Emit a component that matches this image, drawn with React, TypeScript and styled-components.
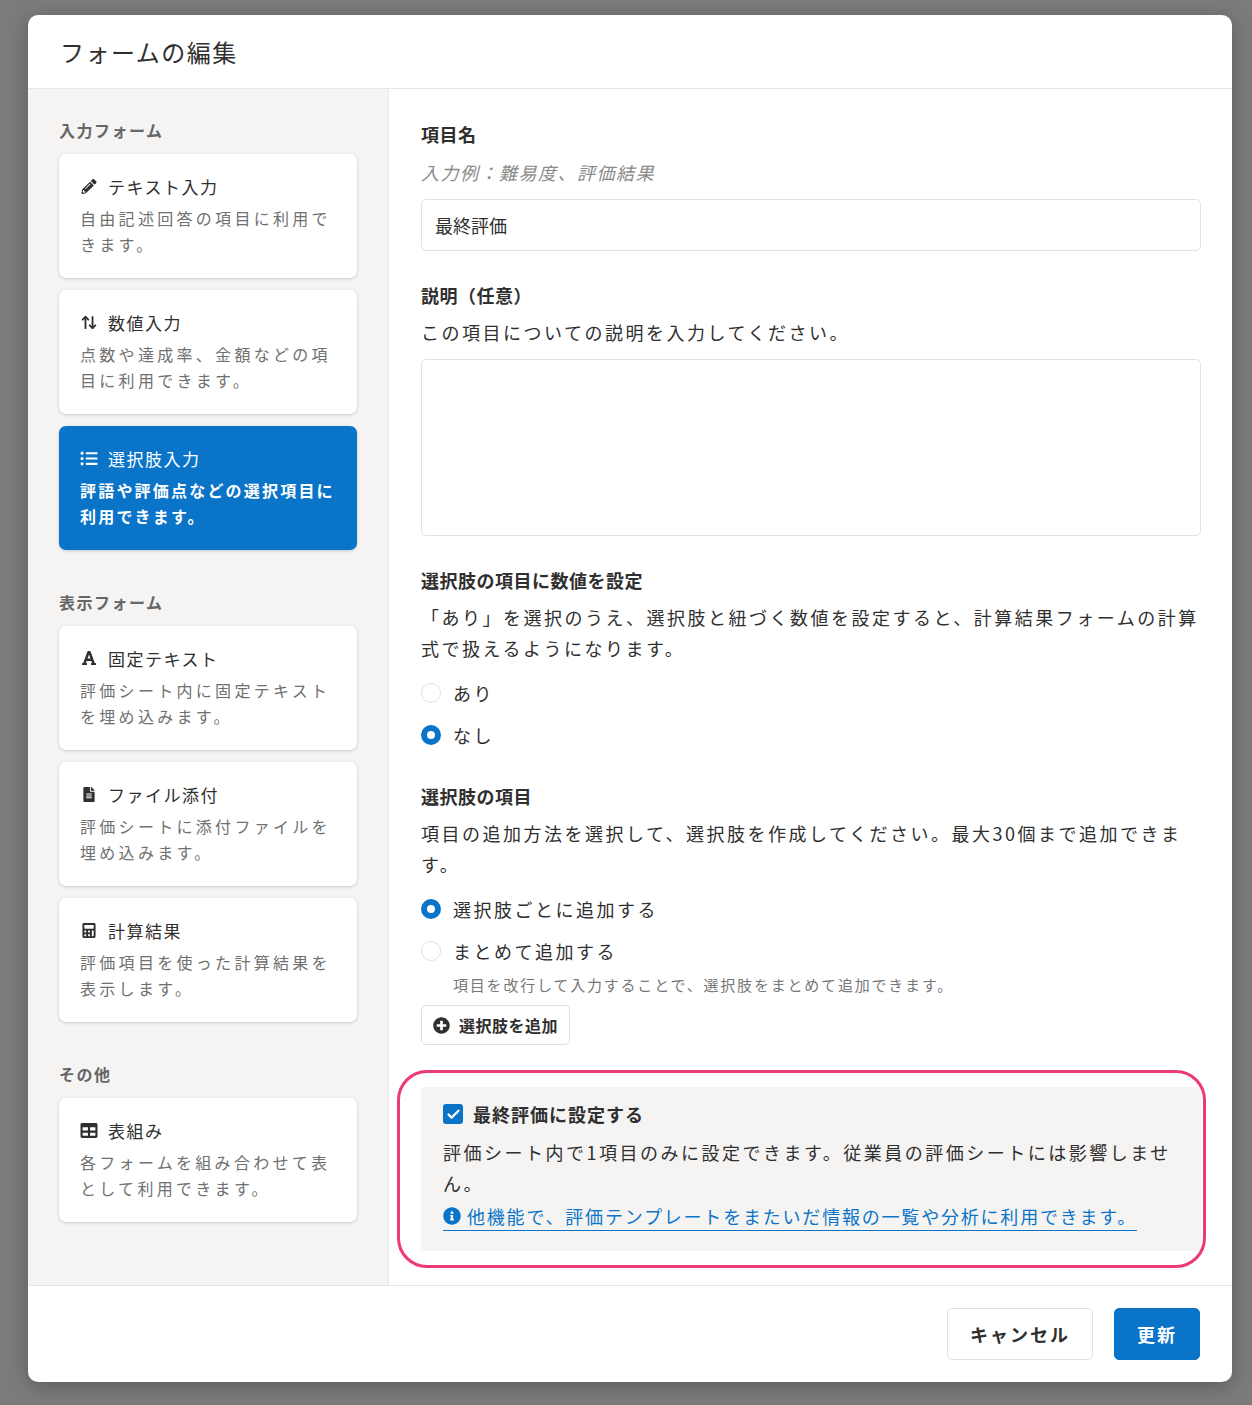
import React from "react";
import styled, { createGlobalStyle } from "styled-components";
import {
    FaPencilAlt,
    FaListUl,
    FaFont,
    FaFileAlt,
    FaCalculator,
    FaTable,
    FaPlusCircle,
    FaInfoCircle,
} from "react-icons/fa";
import { ArrowUpDown, Check } from "lucide-react";

const blue = "#0a74c9";
const text = "#2f2f2f";
const muted = "#707070";

const GlobalStyle = createGlobalStyle`
    html, body {
        margin: 0;
        background: #7d7d7d;
        font-family: "Noto Sans CJK JP", "Noto Sans", sans-serif;
        color: ${text};
    }
`;

const Page = styled.div`
    width: 1252px;
    height: 1405px;
    padding: 15px 20px 0 28px;
    box-sizing: border-box;
    background: #7b7b7b;
`;

const Modal = styled.div`
    width: 1204px;
    height: 1367px;
    background: #fff;
    border-radius: 10px;
    overflow: hidden;
    display: flex;
    flex-direction: column;
    box-shadow: 0 4px 20px rgba(0, 0, 0, 0.25);
`;

const Header = styled.div`
    height: 73px;
    flex-shrink: 0;
    display: flex;
    align-items: center;
    padding-left: 32px;
    font-size: 24px;
    letter-spacing: 1.5px;
    border-bottom: 1px solid #e6e6e6;
`;

const Body = styled.div`
    flex: 1;
    display: flex;
    min-height: 0;
`;

const Sidebar = styled.div`
    width: 361px;
    flex-shrink: 0;
    background: #f5f4f3;
    border-right: 1px solid #e8e8e8;
    box-sizing: border-box;
    padding: 29px 31px 0 31px;
`;

const GroupTitle = styled.div`
    font-size: 16px;
    font-weight: 700;
    color: #666;
    margin: 0 0 12px;
    letter-spacing: 1.5px;
`;

const Group = styled.div`
    display: flex;
    flex-direction: column;
    gap: 12px;
    margin-bottom: 40px;
`;

const Card = styled.div<{ $active?: boolean }>`
    height: 124px;
    box-sizing: border-box;
    padding: 19px 21px;
    border-radius: 7px;
    background: ${(p) => (p.$active ? blue : "#fff")};
    color: ${(p) => (p.$active ? "#fff" : text)};
    box-shadow: 0 1px 3px rgba(0, 0, 0, 0.18);
`;

const CardTitle = styled.div`
    display: flex;
    align-items: center;
    gap: 10px;
    font-size: 17px;
    height: 26px;
    margin-bottom: 6px;
    letter-spacing: 1.5px;
    svg {
        width: 18px;
    }
`;

const CardDesc = styled.div<{ $active?: boolean }>`
    font-size: 16px;
    line-height: 26px;
    letter-spacing: 3.3px;
    color: ${(p) => (p.$active ? "#fff" : muted)};
    font-weight: ${(p) => (p.$active ? 700 : 400)};
    letter-spacing: ${(p) => (p.$active ? "2.2px" : "3.3px")};
`;

const Main = styled.div`
    flex: 1;
    padding: 31px 31px 0 32px;
    box-sizing: border-box;
`;

const Label = styled.div<{ $mt?: number }>`
    font-size: 18px;
    font-weight: 700;
    margin-top: ${(p) => p.$mt ?? 0}px;
    line-height: 28px;
    letter-spacing: 0.5px;
`;

const Hint = styled.div`
    font-size: 18px;
    color: #8a8a8a;
    font-style: italic;
    line-height: 28px;
    margin: 10px 0 13px;
    letter-spacing: 1.5px;
`;

const Para = styled.div`
    font-size: 18px;
    line-height: 31px;
    letter-spacing: 2.5px;
    margin-top: 8px;
`;

const Input = styled.div`
    height: 52px;
    box-sizing: border-box;
    border: 1px solid #e2e2e2;
    border-radius: 5px;
    padding: 0 13px;
    display: flex;
    align-items: center;
    font-size: 18px;
`;

const TextArea = styled.div`
    height: 177px;
    box-sizing: border-box;
    border: 1px solid #e2e2e2;
    border-radius: 5px;
    margin-top: 11px;
`;

const RadioGroup = styled.div`
    margin-top: 8px;
`;

const RadioRow = styled.div`
    display: flex;
    align-items: center;
    gap: 12px;
    height: 42px;
    font-size: 18px;
    letter-spacing: 2.5px;
`;

const Radio = styled.span<{ $on?: boolean }>`
    width: 20px;
    height: 20px;
    box-sizing: border-box;
    border-radius: 50%;
    border: ${(p) => (p.$on ? `6px solid ${blue}` : "1px solid #e0e0e0")};
    background: #fff;
`;

const SmallNote = styled.div`
    font-size: 15px;
    color: #777;
    padding-left: 32px;
    letter-spacing: 1.8px;
    margin-top: 2px;
`;

const AddButton = styled.div`
    display: inline-flex;
    align-items: center;
    gap: 9px;
    height: 40px;
    box-sizing: border-box;
    padding: 0 11px;
    border: 1px solid #e0e0e0;
    border-radius: 5px;
    font-size: 16px;
    font-weight: 700;
    margin-top: 10px;
    letter-spacing: 0.5px;
`;

const FinalBox = styled.div`
    position: relative;
    margin-top: 42px;
    background: #f5f4f3;
    padding: 12px 30px 20px 22px;
    &::after {
        content: "";
        position: absolute;
        left: -24px;
        right: -5px;
        top: -17px;
        bottom: -17px;
        border: 3px solid #ec3a72;
        border-radius: 30px;
    }
`;

const CheckRow = styled.div`
    display: flex;
    align-items: center;
    gap: 10px;
    font-size: 18px;
    font-weight: 700;
    height: 30px;
    letter-spacing: 1px;
`;

const CheckBox = styled.span`
    width: 20px;
    height: 20px;
    border-radius: 3px;
    background: ${blue};
    display: inline-flex;
    align-items: center;
    justify-content: center;
`;

const InfoLink = styled.div`
    display: inline-flex;
    align-items: center;
    gap: 6px;
    color: ${blue};
    font-size: 18px;
    letter-spacing: 1.8px;
    border-bottom: 1px solid ${blue};
    padding-bottom: 1px;
    margin-top: 4px;
`;

const Footer = styled.div`
    height: 96px;
    flex-shrink: 0;
    border-top: 1px solid #e6e6e6;
    display: flex;
    justify-content: flex-end;
    align-items: center;
    gap: 21px;
    padding-right: 32px;
`;

const Button = styled.div<{ $primary?: boolean }>`
    height: 52px;
    box-sizing: border-box;
    padding: 0 22px;
    border-radius: 5px;
    display: flex;
    align-items: center;
    font-size: 18px;
    font-weight: 700;
    letter-spacing: 2px;
    background: ${(p) => (p.$primary ? blue : "#fff")};
    color: ${(p) => (p.$primary ? "#fff" : text)};
    border: 1px solid ${(p) => (p.$primary ? blue : "#e0e0e0")};
`;

const cards = [
    {
        title: "入力フォーム",
        items: [
            { icon: <FaPencilAlt size={15} />, name: "テキスト入力", desc: "自由記述回答の項目に利用できます。" },
            { icon: <ArrowUpDown size={17} strokeWidth={2.6} />, name: "数値入力", desc: "点数や達成率、金額などの項目に利用できます。" },
            { icon: <FaListUl size={17} />, name: "選択肢入力", desc: "評語や評価点などの選択項目に利用できます。", active: true },
        ],
    },
    {
        title: "表示フォーム",
        items: [
            { icon: <FaFont size={16} />, name: "固定テキスト", desc: "評価シート内に固定テキストを埋め込みます。" },
            { icon: <FaFileAlt size={15} />, name: "ファイル添付", desc: "評価シートに添付ファイルを埋め込みます。" },
            { icon: <FaCalculator size={15} />, name: "計算結果", desc: "評価項目を使った計算結果を表示します。" },
        ],
    },
    {
        title: "その他",
        items: [{ icon: <FaTable size={17} />, name: "表組み", desc: "各フォームを組み合わせて表として利用できます。" }],
    },
];

const App: React.FC = () => (
    <>
        <GlobalStyle />
        <Page>
            <Modal>
                <Header>フォームの編集</Header>
                <Body>
                    <Sidebar>
                        {cards.map((g) => (
                            <React.Fragment key={g.title}>
                                <GroupTitle>{g.title}</GroupTitle>
                                <Group>
                                    {g.items.map((c) => (
                                        <Card key={c.name} $active={c.active}>
                                            <CardTitle>
                                                {c.icon}
                                                {c.name}
                                            </CardTitle>
                                            <CardDesc $active={c.active}>{c.desc}</CardDesc>
                                        </Card>
                                    ))}
                                </Group>
                            </React.Fragment>
                        ))}
                    </Sidebar>
                    <Main>
                        <Label>項目名</Label>
                        <Hint>入力例：難易度、評価結果</Hint>
                        <Input>最終評価</Input>
                        <Label $mt={30}>説明（任意）</Label>
                        <Para>この項目についての説明を入力してください。</Para>
                        <TextArea />
                        <Label $mt={30}>選択肢の項目に数値を設定</Label>
                        <Para>
                            「あり」を選択のうえ、選択肢と紐づく数値を設定すると、計算結果フォームの計算式で扱えるようになります。
                        </Para>
                        <RadioGroup>
                            <RadioRow>
                                <Radio />
                                あり
                            </RadioRow>
                            <RadioRow>
                                <Radio $on />
                                なし
                            </RadioRow>
                        </RadioGroup>
                        <Label $mt={26}>選択肢の項目</Label>
                        <Para>項目の追加方法を選択して、選択肢を作成してください。最大30個まで追加できます。</Para>
                        <RadioGroup>
                            <RadioRow>
                                <Radio $on />
                                選択肢ごとに追加する
                            </RadioRow>
                            <RadioRow>
                                <Radio />
                                まとめて追加する
                            </RadioRow>
                        </RadioGroup>
                        <SmallNote>項目を改行して入力することで、選択肢をまとめて追加できます。</SmallNote>
                        <AddButton>
                            <FaPlusCircle size={17} />
                            選択肢を追加
                        </AddButton>
                        <FinalBox>
                            <CheckRow>
                                <CheckBox>
                                    <Check size={15} color="#fff" strokeWidth={3.5} />
                                </CheckBox>
                                最終評価に設定する
                            </CheckRow>
                            <Para>評価シート内で1項目のみに設定できます。従業員の評価シートには影響しません。</Para>
                            <InfoLink>
                                <FaInfoCircle size={18} />
                                他機能で、評価テンプレートをまたいだ情報の一覧や分析に利用できます。
                            </InfoLink>
                        </FinalBox>
                    </Main>
                </Body>
                <Footer>
                    <Button>キャンセル</Button>
                    <Button $primary>更新</Button>
                </Footer>
            </Modal>
        </Page>
    </>
);

export default App;
